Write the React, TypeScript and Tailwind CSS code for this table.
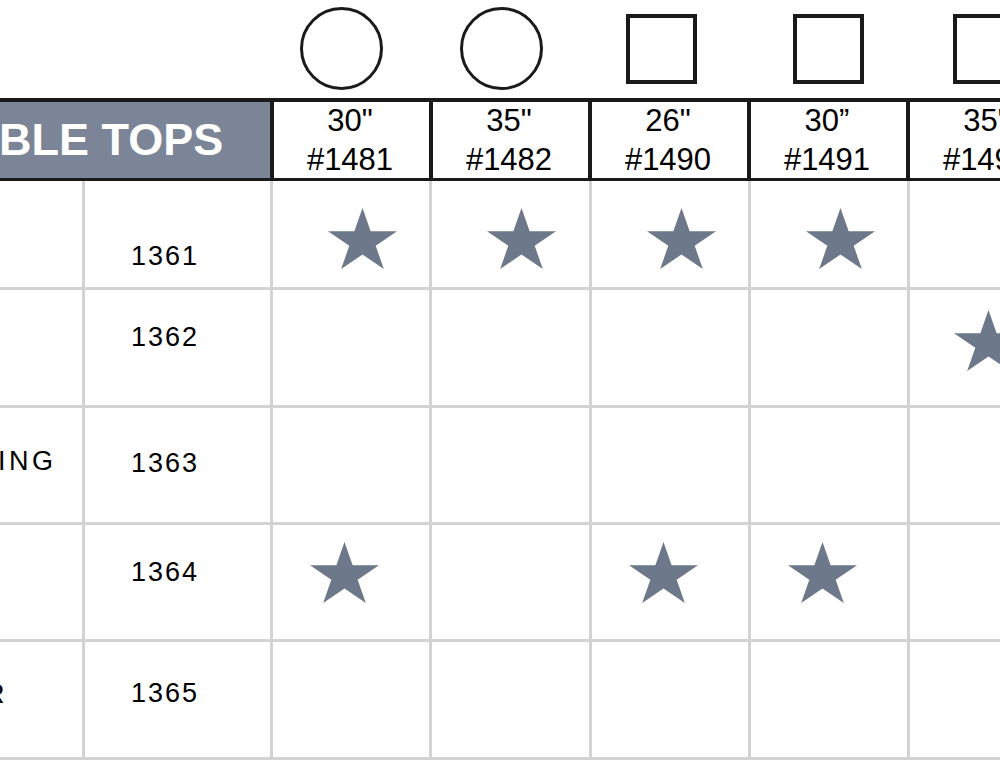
const STAR_FILL = "#6d788b";

function Star() {
    return (
        <svg width="69" height="61" viewBox="0 0 100 100" preserveAspectRatio="none" className="block">
            <polygon
                points="50,0 61.8,38.2 100,38.2 69.1,61.8 80.9,100 50,76.4 19.1,100 30.9,61.8 0,38.2 38.2,38.2"
                fill={STAR_FILL}
            />
        </svg>
    );
}

const tops = [
    { size: "30\"", num: "#1481", shape: "ml-[26px] mt-[7px] w-[83px] h-[83px] rounded-full border-[3px] border-[#1a1a1a]" },
    { size: "35\"", num: "#1482", shape: "ml-[27px] mt-[7px] w-[83px] h-[83px] rounded-full border-[3px] border-[#1a1a1a]" },
    { size: "26\"", num: "#1490", shape: "ml-[34px] mt-[14px] w-[71px] h-[70px] border-[4px] border-[#1a1a1a]" },
    { size: "30\u201d", num: "#1491", shape: "ml-[42px] mt-[14px] w-[71px] h-[70px] border-[4px] border-[#1a1a1a]" },
    { size: "35\"", num: "#1492", shape: "ml-[43px] mt-[14px] w-[71px] h-[70px] border-[4px] border-[#1a1a1a]" },
];

// one entry per body row; class strings are written out in full
const rows = [
    { code: "1361", label: "", labelCls: "", rowCls: "h-[109px]", textCls: "pt-[60px]", starCls: "pt-[27px] pl-[22px]", stars: [true, true, true, true, false] },
    { code: "1362", label: "", labelCls: "", rowCls: "h-[118px]", textCls: "pt-[32px]", starCls: "pt-[20px] pl-[0px]", stars: [false, false, false, false, true] },
    { code: "1363", label: "ING", labelCls: "pt-[38px] ml-[-2px]", rowCls: "h-[117px]", textCls: "pt-[40px]", starCls: "pt-[20px]", stars: [false, false, false, false, false] },
    { code: "1364", label: "", labelCls: "", rowCls: "h-[117px]", textCls: "pt-[32px]", starCls: "pt-[17px] pr-[14px]", stars: [true, false, true, true, false] },
    { code: "1365", label: "R", labelCls: "pt-[37px] ml-[-15px]", rowCls: "h-[118px]", textCls: "pt-[36px]", starCls: "pt-[20px]", stars: [false, false, false, false, false] },
];

export default function App() {
    return (
        <div
            className="w-[1000px] h-[767px] overflow-hidden bg-white text-black"
            style={{ fontFamily: '"Liberation Sans", Arial, sans-serif' }}
        >
            {/* top shapes */}
            <div className="flex h-[98px]">
                <div className="w-[274px] shrink-0" />
                {tops.map((t) => (
                    <div key={t.num} className="w-[159px] shrink-0 flex items-start">
                        <div className={t.shape} />
                    </div>
                ))}
            </div>

            {/* header bar */}
            <div className="flex h-[83px] border-t-[4px] border-b-[3px] border-[#1a1a1a]">
                <div className="w-[274px] shrink-0 border-r-[4px] border-[#1a1a1a] bg-[#7b8597] flex items-center overflow-hidden">
                    <span className="text-[45px] font-bold text-white leading-none whitespace-nowrap ml-[-1px] mt-[-2px]">BLE TOPS</span>
                </div>
                {tops.map((t) => (
                    <div
                        key={t.num}
                        className="w-[159px] shrink-0 border-r-[4px] border-[#1a1a1a] flex flex-col items-center justify-center text-[31px] leading-[39px] whitespace-nowrap pb-[1px] pr-[3px]"
                    >
                        <span>{t.size}</span>
                        <span>{t.num}</span>
                    </div>
                ))}
            </div>

            {/* body */}
            {rows.map((r) => (
                <div key={r.code} className={`grid grid-cols-[85px_188px_159px_160px_159px_159px_159px] ${r.rowCls}`}>
                    <div className="border-r-[3px] border-b-[3px] border-[#d3d3d3] overflow-hidden">
                        {r.label && (
                            <div className={`text-[27px] leading-[30px] tracking-[3.5px] whitespace-nowrap ${r.labelCls}`}>{r.label}</div>
                        )}
                    </div>
                    <div className="border-r-[3px] border-b-[3px] border-[#d3d3d3]">
                        <div className={`pl-[46px] text-[27px] leading-[30px] tracking-[2px] ${r.textCls}`}>{r.code}</div>
                    </div>
                    {r.stars.map((on, i) => (
                        <div key={i} className="border-r-[3px] border-b-[3px] border-[#d3d3d3]">
                            {on && (
                                <div className={`flex justify-center ${r.starCls}`}>
                                    <Star />
                                </div>
                            )}
                        </div>
                    ))}
                </div>
            ))}
        </div>
    );
}
